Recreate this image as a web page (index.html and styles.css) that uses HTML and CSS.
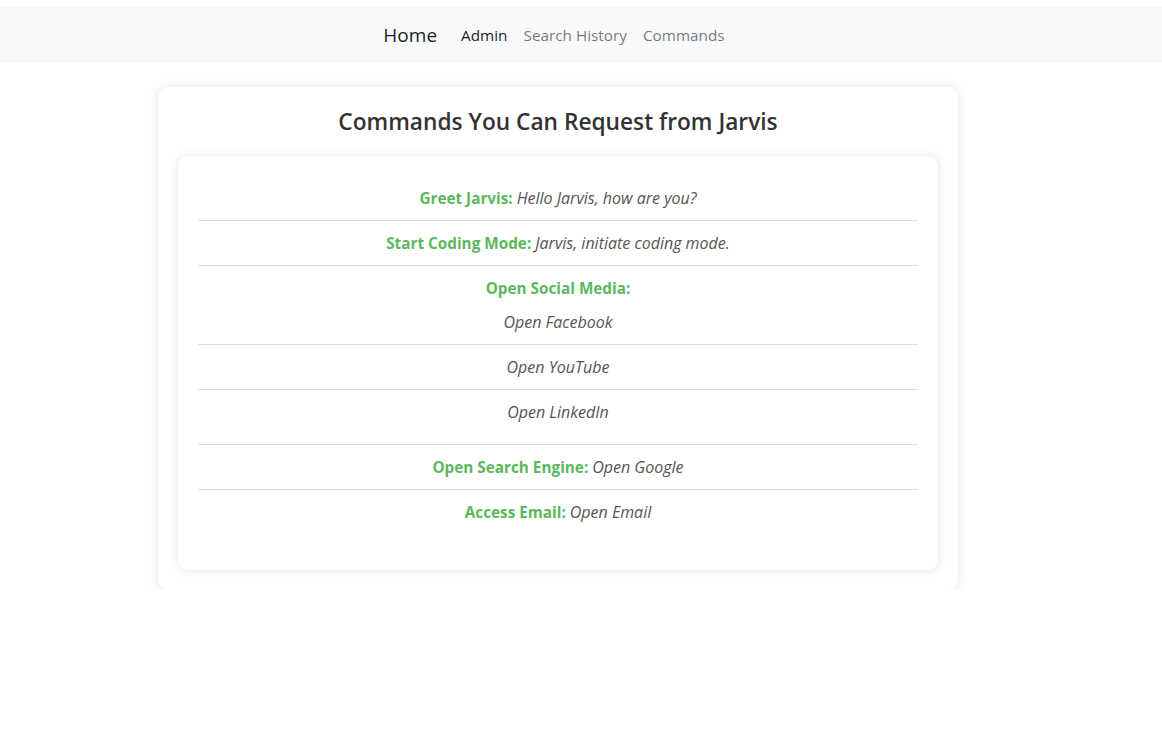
FILE: index.html
```html
<!DOCTYPE html>
<html lang="en">
<head>
<meta charset="utf-8">
<title>Jarvis Commands</title>
<link rel="stylesheet" href="styles.css">
</head>
<body>
<nav class="navbar">
  <div class="navbar-inner">
    <a class="brand" href="#">Home</a>
    <ul class="nav">
      <li><a class="nav-link active" href="#">Admin</a></li>
      <li><a class="nav-link" href="#">Search History</a></li>
      <li><a class="nav-link" href="#">Commands</a></li>
    </ul>
  </div>
</nav>
<div class="page">
  <main class="card">
    <h2 class="title">Commands You Can Request from Jarvis</h2>
    <div class="box">
      <ul class="cmd-list">
        <li><strong>Greet Jarvis:</strong> <em>Hello Jarvis, how are you?</em></li>
        <li><strong>Start Coding Mode:</strong> <em>Jarvis, initiate coding mode.</em></li>
        <li><strong>Open Social Media:</strong>
          <ul class="sub-list">
            <li><em>Open Facebook</em></li>
            <li><em>Open YouTube</em></li>
            <li><em>Open LinkedIn</em></li>
          </ul>
        </li>
        <li><strong>Open Search Engine:</strong> <em>Open Google</em></li>
        <li><strong>Access Email:</strong> <em>Open Email</em></li>
      </ul>
    </div>
  </main>
</div>
</body>
</html>
```
FILE: styles.css
```css
* { box-sizing: border-box; }
body {
  margin: 0;
  font-family: "Open Sans", "Noto Sans", sans-serif;
  font-size: 15.3px;
  line-height: 24px;
  color: #212529;
  background: #fff;
}
a { text-decoration: none; }
.navbar {
  margin-top: 7px;
  background: #f8f9fa;
  height: 56px;
  display: flex;
  align-items: center;
  justify-content: center;
  padding-right: 46px;
}
.navbar-inner {
  display: flex;
  align-items: center;
}
.brand {
  font-size: 19px;
  line-height: 30px;
  color: rgba(0,0,0,0.9);
  margin-right: 16px;
}
.nav {
  display: flex;
  list-style: none;
  margin: 0;
  padding: 0;
}
.nav-link {
  display: block;
  padding: 8px 8px;
  color: rgba(0,0,0,0.55);
}
.nav-link.active { color: rgba(0,0,0,0.9); }
.page {
  width: 1116px;
}
.card {
  width: 800px;
  margin: 24px auto 0;
  padding: 20px;
  background: #fff;
  border-radius: 10px;
  box-shadow: 0 0 10px rgba(0,0,0,0.1);
}
.title {
  margin: 0 0 20px;
  text-align: center;
  font-size: 22.7px;
  line-height: 29px;
  font-weight: 600;
  color: #333;
}
.box {
  padding: 20px;
  background: #fff;
  border-radius: 10px;
  box-shadow: 0 0 10px rgba(0,0,0,0.1);
}
.cmd-list {
  list-style: none;
  margin: 0 0 16px;
  padding: 0;
  text-align: center;
}
.cmd-list li {
  padding: 10px 0;
  border-bottom: 1px solid #ddd;
}
.cmd-list li:last-child { border-bottom: none; }
.cmd-list strong { color: #5cb85c; font-weight: 700; }
.cmd-list em { color: #555; font-size: 16px; }
.sub-list {
  list-style: none;
  margin: 0;
  padding: 0;
}
```
